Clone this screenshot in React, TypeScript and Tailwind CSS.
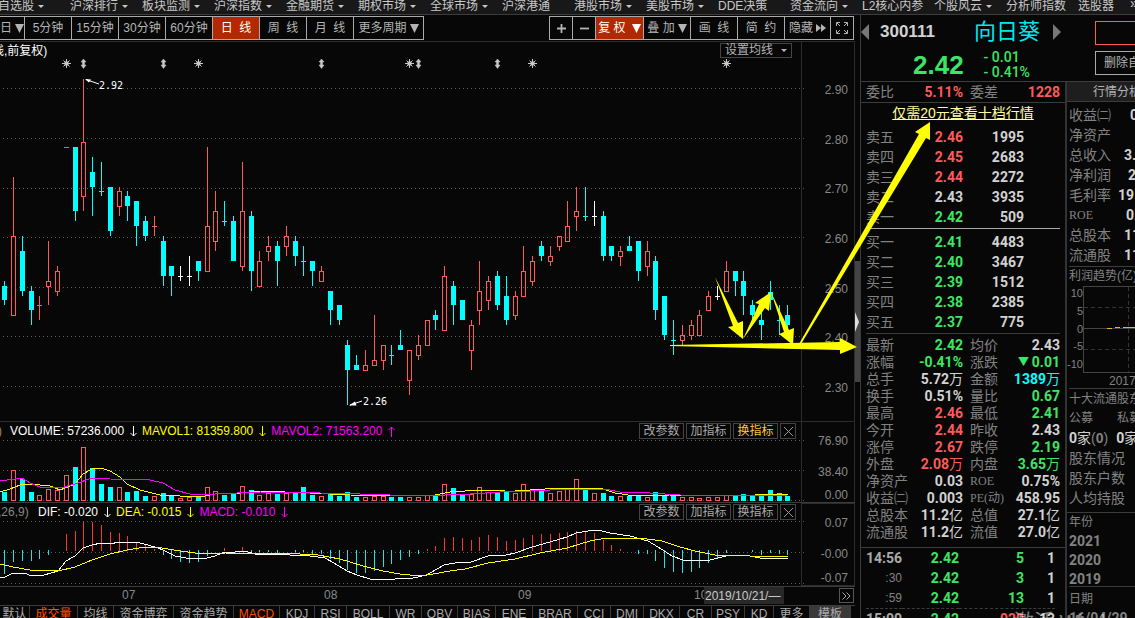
import React from "react";

type Kind = "r" | "c" | "w";
type Candle = [Kind, number, number, number, number];

const RED = "#ff5a5a";
const CYAN = "#00ffff";
const tone: Record<Kind, string> = { r: RED, c: CYAN, w: "#ffffff" };

// kind, high, body top, body bottom, low
const candles: Candle[] = [
  ["c", 281, 286, 300, 305], ["r", 177, 236, 316, 316], ["c", 236, 251, 291, 296], ["c", 286, 291, 310, 325],
  ["r", 296, 305, 305, 320], ["r", 241, 281, 287, 305], ["r", 266, 271, 292, 296], ["r", 147, 147, 147, 148],
  ["c", 147, 147, 211, 221], ["r", 79, 142, 197, 211], ["c", 157, 172, 187, 216], ["c", 162, 191, 191, 196],
  ["c", 187, 187, 231, 236], ["r", 187, 191, 207, 216], ["c", 191, 196, 206, 221], ["c", 201, 201, 226, 246],
  ["c", 216, 221, 236, 241], ["r", 216, 226, 226, 236], ["c", 236, 241, 276, 286], ["c", 266, 266, 276, 296],
  ["w", 266, 276, 276, 281], ["w", 256, 276, 276, 286], ["c", 261, 261, 271, 281], ["r", 147, 226, 272, 272],
  ["r", 191, 211, 242, 251], ["c", 201, 221, 221, 226], ["c", 216, 221, 261, 261], ["r", 162, 211, 267, 271],
  ["c", 211, 216, 271, 291], ["r", 251, 261, 287, 287], ["r", 236, 246, 252, 261], ["c", 241, 246, 261, 286],
  ["r", 226, 236, 247, 256], ["c", 236, 241, 256, 266], ["c", 246, 261, 261, 276], ["c", 261, 261, 271, 286],
  ["r", 266, 271, 282, 282], ["c", 291, 291, 310, 325], ["c", 305, 305, 320, 325], ["c", 340, 345, 370, 405],
  ["c", 355, 365, 370, 370], ["r", 350, 365, 371, 371], ["r", 315, 360, 366, 366], ["r", 345, 345, 361, 370],
  ["c", 345, 355, 355, 365], ["c", 330, 345, 350, 350], ["r", 350, 350, 381, 395], ["r", 335, 345, 356, 360],
  ["r", 320, 320, 346, 346], ["c", 310, 315, 320, 330], ["r", 266, 276, 331, 331], ["c", 281, 286, 305, 325],
  ["c", 300, 300, 320, 320], ["r", 320, 325, 351, 370], ["r", 261, 291, 311, 325], ["r", 276, 281, 301, 310],
  ["c", 271, 276, 305, 310], ["c", 276, 296, 320, 325], ["r", 291, 296, 316, 320], ["r", 246, 271, 297, 297],
  ["r", 256, 261, 282, 286], ["c", 241, 246, 256, 261], ["r", 246, 256, 262, 266], ["r", 236, 236, 247, 251],
  ["r", 201, 226, 242, 242], ["r", 187, 211, 217, 231], ["c", 187, 216, 216, 221], ["w", 201, 216, 216, 226],
  ["c", 211, 216, 256, 261], ["c", 246, 246, 256, 261], ["r", 246, 251, 257, 266], ["c", 236, 246, 251, 251],
  ["c", 241, 241, 271, 281], ["r", 241, 251, 267, 276], ["c", 256, 261, 310, 320], ["c", 296, 296, 335, 340],
  ["c", 320, 340, 340, 355], ["r", 325, 335, 341, 345], ["r", 320, 325, 336, 340], ["r", 310, 315, 336, 336],
  ["r", 291, 296, 311, 311], ["w", 286, 296, 296, 300], ["r", 261, 271, 292, 292], ["c", 271, 271, 281, 296],
  ["c", 271, 281, 296, 315], ["c", 300, 305, 315, 320], ["c", 312, 320, 325, 340], ["c", 281, 292, 300, 310],
  ["c", 305, 320, 320, 335], ["c", 305, 315, 325, 332],
];

const volumeTops = [
  492, 470, 479, 492, 495, 489, 490, 475, 467, 447, 468, 484, 487, 487, 492, 491, 496, 496, 493, 496, 498, 497, 497,
  487, 491, 495, 494, 486, 490, 495, 493, 494, 493, 493, 487, 495, 496, 494, 496, 492, 497, 497, 496, 496, 497, 497,
  497, 497, 495, 496, 484, 488, 494, 494, 487, 492, 492, 492, 493, 484, 490, 489, 493, 491, 488, 479, 489, 493, 493,
  496, 496, 496, 495, 497, 492, 495, 495, 497, 497, 498, 497, 497, 495, 496, 494, 495, 496, 490, 493, 496,
];

// 0 draws nothing
const macdEnds = [
  574, 562, 561, 561, 559, 555, 0, 534, 531, 522, 522, 525, 532, 533, 536, 542, 545, 549, 555, 559, 562, 563, 562,
  556, 0, 548, 0, 547, 552, 552, 552, 553, 0, 552, 552, 554, 554, 559, 563, 570, 573, 573, 571, 567, 564, 560, 557,
  554, 549, 546, 538, 537, 538, 540, 537, 535, 537, 541, 540, 538, 535, 534, 534, 533, 532, 531, 532, 533, 540, 545,
  549, 0, 554, 554, 561, 568, 572, 573, 572, 568, 563, 559, 553, 0, 0, 552, 555, 553, 554, 555,
];

const cx = (i: number) => Math.floor(4.65 + 8.8 * i);

function Grid({ ys }: { ys: number[] }) {
  return (
    <>
      {ys.map((y) => (
        <line key={y} x1="3" x2="804" y1={y + 0.5} y2={y + 0.5} stroke="#5a5a5a" strokeDasharray="1 3" />
      ))}
    </>
  );
}

function Star({ x }: { x: number }) {
  return (
    <g stroke="#c8c8c8" strokeWidth="1" shapeRendering="auto">
      <circle cx={x + 0.5} cy="63.5" r="2.3" fill="#c8c8c8" stroke="none" />
      <path d={`M${x - 4} 63.5h9M${x + 0.5} 59v9M${x - 2.5} 60.5l6 6M${x + 3.5} 60.5l-6 6`} />
    </g>
  );
}

function UpDown({ x }: { x: number }) {
  return (
    <path
      d={`M${x + 0.5} 59l2.5 3h-1.5v3h1.5l-2.5 3.5l-2.5-3.5h1.5v-3h-1.5z`}
      fill="#c8c8c8"
      stroke="#c8c8c8"
      strokeWidth="0.5"
      shapeRendering="auto"
    />
  );
}

function CandleChart() {
  return (
    <svg
      className="absolute inset-0 h-full w-full overflow-visible"
      viewBox="0 42 801 379"
      preserveAspectRatio="none"
      shapeRendering="crispEdges"
      aria-hidden="true"
    >
      <Grid ys={[88, 138, 188, 237, 287, 336, 386]} />
      {[66, 198, 409, 532, 726].map((x) => (
        <Star key={x} x={x} />
      ))}
      {[83, 163, 321, 418, 497].map((x) => (
        <UpDown key={x} x={x} />
      ))}
      {candles.map(([k, h, t, b, l], i) => {
        const x = cx(i);
        const color = tone[k];
        if (t === b) {
          return (
            <g key={i} fill={color}>
              <rect x={x} y={h} width="1" height={l - h} />
              <rect x={x - 2} y={t} width="5" height="1" />
            </g>
          );
        }
        return (
          <g key={i} fill={color}>
            {t > h && <rect x={x} y={h} width="1" height={t - h} />}
            {l > b && <rect x={x} y={b} width="1" height={l - b} />}
            {k === "r" ? (
              <rect x={x - 1.5} y={t + 0.5} width="4" height={b - t - 1} fill="none" stroke={color} />
            ) : (
              <rect x={x - 2} y={t} width="5" height={b - t} />
            )}
          </g>
        );
      })}
      <g stroke="#fff" fill="#fff" shapeRendering="auto">
        <path d="M99 84L86 79.500" />
        <path d="M85 79l6 0.500l-2 3z" stroke="none" />
        <path d="M362 401L350 405" />
        <path d="M349 405.500l6-4l1.500 4z" stroke="none" />
      </g>
      <g fill="#fff" className="font-['DejaVu_Sans_Mono',monospace] text-[10px]">
        <text x="99" y="89">2.92</text>
        <text x="363" y="405">2.26</text>
      </g>
    </svg>
  );
}

function VolumeChart() {
  return (
    <svg
      className="absolute inset-0 h-full w-full overflow-visible"
      viewBox="0 422 801 80"
      preserveAspectRatio="none"
      shapeRendering="crispEdges"
      aria-hidden="true"
    >
      <Grid ys={[440, 470, 500]} />
      {volumeTops.map((y, i) => {
        const x = cx(i);
        return candles[i][0] === "c" ? (
          <rect key={i} x={x - 2} y={y} width="5" height={501 - y} fill={CYAN} />
        ) : (
          <rect key={i} x={x - 1.5} y={y + 0.5} width="4" height={500 - y} fill="none" stroke={RED} />
        );
      })}
      <polyline
        fill="none"
        stroke="#ffff00"
        points="0,492 10,489 20,485 30,484 50,486 60,490 75,484 83,474 92,469 101,468 110,471 120,477 127,484 140,490 160,495 180,496 205,496 215,494 240,493 260,491 285,492 310,493 350,495 390,496 435,495 450,492 480,490 505,491 515,491 545,489 575,488 600,488 615,493 635,496 670,495 690,495 715,496 755,495 770,494 788,494"
      />
      <polyline
        fill="none"
        stroke="#ff00ff"
        points="0,481 22,478 30,483 40,487 60,488 75,484 92,478 110,479 150,480 163,483 175,490 190,494 215,494 260,492 320,493 360,494 420,496 470,494 500,492 530,491 570,489 605,489 620,492 650,493 680,495 740,496 788,495"
      />
    </svg>
  );
}

function MacdChart() {
  return (
    <svg
      className="absolute inset-0 h-full w-full overflow-visible"
      viewBox="0 503 801 83"
      preserveAspectRatio="none"
      shapeRendering="crispEdges"
      aria-hidden="true"
    >
      <Grid ys={[521, 552, 583]} />
      {macdEnds.map((y, i) => {
        if (!y) return null;
        return y < 551 ? (
          <rect key={i} x={cx(i)} y={y} width="1" height={551 - y} fill="#ff3232" />
        ) : (
          <rect key={i} x={cx(i)} y="550" width="1" height={y - 550} fill="#19e6e6" />
        );
      })}
      <polyline
        fill="none"
        stroke="#ffffff"
        points="0,578 5,577 13,573 24,573 32,576 44,575 58,571 66,561 75,556 83,548 92,545 101,543 110,544 119,542 136,542 148,545 158,548 163,550 175,556 186,558 198,559 207,558 215,556 222,553 235,552 245,551 255,554 270,554 290,555 310,556 325,558 334,563 347,571 357,575 370,579 395,579 413,578 427,575 430,573 444,565 455,563 471,562 488,556 506,555 515,553 532,547 550,542 567,537 576,533 588,531 598,530 610,533 630,536 648,541 658,547 672,556 683,560 695,561 710,560 726,556 745,555 760,558 775,558 788,559"
      />
      <polyline
        fill="none"
        stroke="#ffff00"
        points="0,564 13,567 30,570 58,571 75,567 92,560 110,554 127,550 145,547 162,548 180,551 203,554 225,553 300,554 318,555 340,559 363,566 383,571 400,574 420,576 433,574 450,571 465,569 488,563 515,559 540,553 567,548 590,541 606,538 640,538 662,541 680,547 695,551 715,555 750,556 788,557"
      />
    </svg>
  );
}

const navItems: [string, boolean][] = [
  ["自选股", true], ["沪深排行", true], ["板块监测", true], ["沪深指数", true], ["金融期货", true],
  ["期权市场", true], ["全球市场", true], ["沪深港通", false], ["港股市场", true], ["美股市场", true],
  ["DDE决策", false], ["资金流向", true], ["L2核心内参", false], ["个股风云", true], ["分析师指数", false],
  ["选股器", false],
];

function Caret({ big = false }: { big?: boolean }) {
  return big ? (
    <svg className="h-[9px] w-[9px] shrink-0" viewBox="0 0 9 9" aria-hidden="true">
      <path d="M0 0h9L4.500 9z" fill="currentColor" />
    </svg>
  ) : (
    <svg className="h-[3px] w-[6px] shrink-0" viewBox="0 0 6 3" aria-hidden="true">
      <path d="M0 0h6L3 3z" fill="currentColor" />
    </svg>
  );
}

function NavBar() {
  return (
    <nav className="flex h-[15px] shrink-0 overflow-hidden border-b border-[#3c3c3c] bg-[#181818] text-[12px] leading-[12px] text-[#c8c8c8]">
      <div className="-ml-[2px] flex h-3 shrink-0">
        {navItems.map(([label, caret]) => (
          <a key={label} href="#" className="flex w-[72px] shrink-0 items-center gap-1 whitespace-nowrap">
            {label}
            {caret && <Caret />}
          </a>
        ))}
      </div>
      <a href="#" className="-ml-5 h-2 w-5 text-[14px] leading-[7px]">
        »
      </a>
    </nav>
  );
}

function Tool({ className = "", children, label }: { className?: string; children: React.ReactNode; label?: string }) {
  return (
    <button
      type="button"
      aria-label={label}
      className={`flex h-[22px] shrink-0 items-center justify-center gap-[3px] whitespace-pre border-r border-[#aaaaaa] ${className}`}
    >
      {children}
    </button>
  );
}

function Toolbar() {
  return (
    <div className="flex h-[27px] shrink-0 justify-between border-b border-[#2c2c2c] pt-px text-[12px] text-[#b4b4b4]">
      <div className="flex h-6 border-y border-[#aaaaaa]">
        <Tool className="w-[25px]">日<Caret big /></Tool>
        <Tool className="w-[47px]">5分钟</Tool>
        <Tool className="w-[47px]">15分钟</Tool>
        <Tool className="w-[47px]">30分钟</Tool>
        <Tool className="w-[47px]">60分钟</Tool>
        <Tool className="w-[47px] bg-[#b42800] text-white">日  线</Tool>
        <Tool className="w-[47px]">周  线</Tool>
        <Tool className="w-[47px]">月  线</Tool>
        <Tool className="w-[70px]">更多周期<Caret big /></Tool>
      </div>
      <div className="mr-px flex h-6 border-y border-l border-[#aaaaaa]">
        <Tool className="w-[23px]" label="放大">
          <svg className="h-[9px] w-[9px]" viewBox="0 0 9 9"><path d="M0 4.500h9M4.500 0v9" stroke="currentColor" strokeWidth="1.800" /></svg>
        </Tool>
        <Tool className="w-[23px]" label="缩小">
          <svg className="h-[9px] w-[9px]" viewBox="0 0 9 9"><path d="M0 4.500h9" stroke="currentColor" strokeWidth="1.800" /></svg>
        </Tool>
        <Tool className="w-12 bg-[#b42800] text-white">复 权 <Caret big /></Tool>
        <Tool className="w-[47px]">叠 加<Caret big /></Tool>
        <Tool className="w-[47px]">画  线</Tool>
        <Tool className="w-[47px]">简  约</Tool>
        <Tool className="w-[46px]">
          隐藏
          <svg className="h-2 w-[10px]" viewBox="0 0 10 8" aria-hidden="true"><path d="M0 0l5 4l-5 4zM5 0l5 4l-5 4z" fill="currentColor" /></svg>
        </Tool>
        <Tool className="w-[23px]" label="全屏">
          <svg className="h-3 w-3" viewBox="0 0 12 12" fill="none" stroke="currentColor">
            <path d="M0.500 4V0.500H4M8 0.500h3.500V4M11.500 8v3.500H8M4 11.500H0.500V8M1 1l3 3M11 1l-3 3M1 11l3-3M11 11l-3-3" />
          </svg>
        </Tool>
      </div>
    </div>
  );
}

function IndicatorButtons({ active = false }: { active?: boolean }) {
  const base = "h-4 w-[45px] border border-[#444444] text-center leading-[14px]";
  return (
    <div className="flex gap-[2px] text-[12px] text-[#aaaaaa]">
      <button type="button" className={base}>改参数</button>
      <button type="button" className={base}>加指标</button>
      <button type="button" className={`${base} ${active ? "text-[#ffc832]" : ""}`}>换指标</button>
      <button type="button" aria-label="关闭" className="flex h-4 w-4 items-center justify-center border border-[#444444]">
        <svg className="h-[9px] w-[9px]" viewBox="0 0 9 9"><path d="M0 0l9 9M9 0L0 9" stroke="#999" /></svg>
      </button>
    </div>
  );
}

function Dir({ up = false }: { up?: boolean }) {
  return (
    <svg className="mr-[5px] ml-[6px] h-[11px] w-[7px]" viewBox="0 0 7 11" fill="none" stroke="currentColor" aria-hidden="true">
      {up ? <path d="M3.500 11V1M0.500 4l3-3l3 3" /> : <path d="M3.500 0v10M0.500 7l3 3l3-3" />}
    </svg>
  );
}

const indicatorTabs: [string, string][] = [
  ["默认", "w-[30px]"], ["成交量", "w-12"], ["均线", "w-9"], ["资金博弈", "w-[60px]"], ["资金趋势", "w-[60px]"],
  ["MACD", "w-[46px]"], ["KDJ", "w-[35px]"], ["RSI", "w-8"], ["BOLL", "w-[43px]"], ["WR", "w-8"], ["OBV", "w-9"],
  ["BIAS", "w-[38px]"], ["ENE", "w-[37px]"], ["BRAR", "w-[45px]"], ["CCI", "w-[33px]"], ["DMI", "w-[33px]"],
  ["DKX", "w-9"], ["CR", "w-8"], ["PSY", "w-[33px]"], ["KD", "w-[29px]"], ["更多", "w-9"], ["模板", "w-[41px]"],
];

const axis = "flex w-[54px] shrink-0 flex-col justify-between border-x border-[#2c2c2c] pr-[6px] text-right text-[12px] leading-[14px] text-[#888888]";

function ChartArea() {
  return (
    <div className="flex min-w-0 flex-1 flex-col">
      <Toolbar />
      <section className="flex min-h-0 flex-1 border-b border-[#2c2c2c]">
        <div className="relative min-w-0 flex-1">
          <CandleChart />
          <div className="flex justify-between text-[12px]">
            <span className="-ml-2 leading-[19px] text-white">线,前复权)</span>
            <button type="button" className="mt-px mr-[9px] flex h-[15px] w-[72px] items-center justify-center gap-2 border border-[#444444] leading-[13px] text-[#b4b4b4]">
              设置均线
              <Caret />
            </button>
          </div>
        </div>
        <div className={`${axis} pt-[41px] pb-[26px]`}>
          {["2.90", "2.80", "2.70", "2.60", "2.50", "2.40", "2.30"].map((v) => (
            <span key={v}>{v}</span>
          ))}
        </div>
      </section>

      <section className="flex h-[81px] shrink-0 border-b border-[#3c3c3c]">
        <div className="relative min-w-0 flex-1">
          <VolumeChart />
          <div className="relative flex justify-between pt-px pr-[5px]">
            <div className="flex items-center whitespace-nowrap text-[12px] leading-4 text-white">
              <span className="-ml-[2px] w-3 text-[#888888]">)</span>
              <span>VOLUME: 57236.000</span>
              <Dir />
              <span className="flex items-center text-[#ffff00]">MAVOL1: 81359.800<Dir /></span>
              <span className="flex items-center text-[#ff00ff]">MAVOL2: 71563.200<Dir up /></span>
            </div>
            <IndicatorButtons active />
          </div>
        </div>
        <div className={`${axis} pt-3`}>
          <span>76.90</span>
          <span className="pt-2">38.40</span>
          <span>0.00</span>
        </div>
      </section>

      <section className="flex h-[84px] shrink-0 border-b border-[#3c3c3c]">
        <div className="relative min-w-0 flex-1">
          <MacdChart />
          <div className="relative flex justify-between pt-px pr-[5px]">
            <div className="flex items-center whitespace-nowrap text-[12px] leading-4 text-white">
              <span className="-ml-[2px] w-10 text-[#888888]">,26,9)</span>
              <span>DIF: -0.020</span>
              <Dir />
              <span className="flex items-center text-[#ffff00]">DEA: -0.015<Dir /></span>
              <span className="flex items-center text-[#ff00ff]">MACD: -0.010<Dir /></span>
            </div>
            <IndicatorButtons />
          </div>
        </div>
        <div className={`${axis} border-y pt-3`}>
          <span>0.07</span>
          <span className="pt-[6px]">-0.00</span>
          <span>-0.07</span>
        </div>
      </section>

      <div className="flex h-[18px] shrink-0 pl-[122px] text-[12px] leading-4 text-[#888888]">
        <span className="w-[202px]">07</span>
        <span className="w-[194px]">08</span>
        <span className="w-[176px]">09</span>
        <span className="w-[10px] overflow-hidden">10</span>
        <span className="h-[17px] w-[80px] bg-[#282828] pl-px pt-px text-[#c8c8c8]">2019/10/21/—</span>
        <button type="button" aria-label="展开" className="mt-px mr-[1px] ml-auto flex h-[15px] w-[15px] items-center justify-center border border-[#555555]">
          <svg className="h-2 w-[9px]" viewBox="0 0 9 8" fill="none" stroke="#aaa"><path d="M0.500 0.500L4 4L0.500 7.500M4.500 0.500L8 4L4.500 7.500" /></svg>
        </button>
      </div>

      <div className="flex h-[13px] shrink-0 overflow-hidden border-t border-[#3c3c3c] text-[12px] leading-4 text-[#aaaaaa]">
        {indicatorTabs.map(([label, width]) => (
          <button
            key={label}
            type="button"
            className={`${width} h-4 shrink-0 whitespace-nowrap border-r border-[#3c3c3c] ${
              label === "MACD" || label === "成交量" ? "text-[#ff5000]" : ""
            } ${label === "模板" ? "mr-1 ml-auto bg-[#3a3a3a]" : ""}`}
          >
            <span className="flex justify-center">{label}</span>
          </button>
        ))}
      </div>
    </div>
  );
}

const up = "text-[#ff5a5a]";
const down = "text-[#3ce664]";
const flat = "text-[#d2d2d2]";
const numFont = "font-['Roboto','Noto_Sans_CJK_SC',sans-serif]";
const num = "font-['Roboto','Noto_Sans_CJK_SC',sans-serif] font-bold";

const sells = [
  ["卖五", "2.46", "1995", up], ["卖四", "2.45", "2683", up], ["卖三", "2.44", "2272", up],
  ["卖二", "2.43", "3935", flat], ["卖一", "2.42", "509", down],
];
const buys = [
  ["买一", "2.41", "4483", down], ["买二", "2.40", "3467", down], ["买三", "2.39", "1512", down],
  ["买四", "2.38", "2385", down], ["买五", "2.37", "775", down],
];

function Orders({ rows }: { rows: string[][] }) {
  return (
    <table className="w-full table-fixed">
      <tbody>
        {rows.map(([label, price, size, color]) => (
          <tr key={label} className="h-5 leading-5">
            <th className="w-[40px] p-0 text-left font-normal text-[#828282]">{label}</th>
            <td className={`w-[57px] p-0 text-right ${num} ${color}`}>{price}</td>
            <td className={`w-[61px] p-0 text-right ${num} ${flat}`}>{size}</td>
            <td className="p-0" />
          </tr>
        ))}
      </tbody>
    </table>
  );
}

const stats: string[][] = [
  ["最新", "2.42", down, "均价", "2.43", flat],
  ["涨幅", "-0.41%", down, "涨跌", "▼ 0.01", down],
  ["总手", "5.72万", flat, "金额", "1389万", "text-[#00ffff]"],
  ["换手", "0.51%", flat, "量比", "0.67", down],
  ["最高", "2.46", up, "最低", "2.41", down],
  ["今开", "2.44", up, "昨收", "2.43", flat],
  ["涨停", "2.67", up, "跌停", "2.19", down],
  ["外盘", "2.08万", up, "内盘", "3.65万", down],
  ["净资产", "0.03", flat, "ROE", "0.75%", flat],
  ["收益㈡", "0.003", flat, "PE(动)", "458.95", flat],
  ["总股本", "11.2亿", flat, "总值", "27.1亿", flat],
  ["流通股", "11.2亿", flat, "流值", "27.0亿", flat],
];

function Value({ text, color }: { text: string; color: string }) {
  const m = text.match(/^(▼ )?([^万亿]*)([万亿]?)$/);
  return (
    <span className={`flex items-center whitespace-pre ${num} ${color}`}>
      {m?.[1] && <span className="text-[11px]">{m[1]}</span>}
      {m?.[2]}
      <span className="font-normal">{m?.[3]}</span>
    </span>
  );
}

function Label({ text }: { text: string }) {
  return text.startsWith("ROE") || text.startsWith("PE") ? (
    <span className="whitespace-nowrap font-['Liberation_Serif','Noto_Sans_CJK_SC',serif] text-[12px] text-[#828282]">{text}</span>
  ) : (
    <span className="whitespace-nowrap text-[#828282]">{text}</span>
  );
}

const ticks = [
  ["14:56", "2.42", "5", "1"],
  [":30", "2.42", "3", "1"],
  [":59", "2.42", "13", "1"],
  ["15:00", "2.42", "929", "13"],
];

function QuotePanel() {
  return (
    <div className="flex w-[205px] shrink-0 flex-col border-l border-[#3c3c3c] text-[14px]">
      <header className="flex h-[67px] shrink-0 flex-col border-b border-[#3c3c3c]">
        <div className="flex h-[34px] items-center pr-1">
          <button type="button" aria-label="上一只">
            <svg className="h-4 w-2" viewBox="0 0 8 16"><path d="M8 0v16L0 8z" fill="#777" /></svg>
          </button>
          <span className="ml-[11px] w-[94px] text-[17px] font-bold text-[#d2d2d2]">300111</span>
          <span className="text-[22px] leading-[34px] text-[#00e6f0]">向日葵</span>
          <button type="button" aria-label="下一只" className="ml-auto">
            <svg className="h-4 w-2" viewBox="0 0 8 16"><path d="M0 0v16L8 8z" fill="#777" /></svg>
          </button>
        </div>
        <div className={`flex items-center gap-5 pl-[52px] ${down}`}>
          <span className="text-[26px] leading-[30px] font-bold">2.42</span>
          <span className={`whitespace-nowrap pt-px leading-[15px] font-medium ${numFont}`}>
            - 0.01<br />- 0.41%
          </span>
        </div>
      </header>
      <div className="flex h-[21px] shrink-0 items-center border-b border-[#3c3c3c] pr-[5px] pl-[5px]">
        <span className="flex w-[97px] justify-between"><Label text="委比" /><Value text="5.11%" color={up} /></span>
        <span className="ml-[7px] flex flex-1 justify-between"><Label text="委差" /><Value text="1228" color={up} /></span>
      </div>
      <div className="h-[24px] shrink-0 text-center leading-[20px]">
        <a href="#" className="text-[#ffffa0] underline">仅需20元查看十档行情</a>
      </div>
      <div className="mx-[5px] border-b border-[#aaaaaa] pb-px"><Orders rows={sells} /></div>
      <div className="mx-[5px] border-b border-[#3c3c3c] pt-[3px] pb-px"><Orders rows={buys} /></div>
      <div className="grid grid-cols-[97px_1fr] gap-x-[7px] border-b border-[#3c3c3c] px-[5px] pt-[3px] pb-[6px] leading-[17px]">
        {stats.map(([a, av, ac, b, bv, bc]) => (
          <React.Fragment key={a}>
            <span className="flex h-[17px] justify-between"><Label text={a} /><Value text={av} color={ac} /></span>
            <span className="flex h-[17px] justify-between"><Label text={b} /><Value text={bv} color={bc} /></span>
          </React.Fragment>
        ))}
      </div>
      <table className="ml-[5px] w-[189px] table-fixed">
        <tbody>
          {ticks.map(([time, price, size, n], i) => (
            <tr key={time} className={`h-5 leading-5 ${i === 3 ? "border-t border-dashed border-[#3c3c3c]" : ""}`}>
              <td className={`w-[36px] p-0 text-right ${i % 3 === 0 ? `${num} text-[#aaaaaa]` : "text-[12px] text-[#828282]"}`}>{time}</td>
              <td className={`w-[57px] p-0 text-right ${num} ${down}`}>{price}</td>
              <td className={`w-[65px] p-0 text-right ${num} ${i === 3 ? up : down}`}>{size}</td>
              <td className={`p-0 text-right ${num} ${flat}`}>{n}</td>
            </tr>
          ))}
        </tbody>
      </table>
    </div>
  );
}

const finance: [string, string, string][] = [
  ["收益㈡", "0.003", "w-9"], ["净资产", "", "w-9"], ["总收入", "3.", "w-[42px]"], ["净利润", "2", "w-[38px]"],
  ["毛利率", "19", "w-12"], ["ROE", "0.75%", "w-10"], ["总股本", "11.2亿", "w-[42px]"], ["流通股", "11.2亿", "w-[42px]"],
];

function DetailPanel() {
  return (
    <aside className="flex w-[70px] shrink-0 flex-col overflow-hidden whitespace-nowrap text-[14px]">
      <div className="flex h-[67px] shrink-0 flex-col gap-[6px] border-b border-[#3c3c3c] pt-[6px] pl-[30px] text-[12px] text-[#b4b4b4]">
        <button type="button" aria-label="买入" className="h-6 w-[72px] shrink-0 border border-[#ff5a5a]" />
        <button type="button" className="h-6 w-[72px] shrink-0 border border-[#aaaaaa] pl-2 text-left">删除自选</button>
      </div>
      <div className="flex flex-1 flex-col overflow-hidden border-l-2 border-[#333333]">
        <h2 className="h-5 shrink-0 border-b border-[#3c3c3c] bg-[#1e1e1e] pl-[26px] text-[12px] leading-5 text-[#b4b4b4]">行情分析</h2>
        <div className="ml-[2px] border-b border-[#3c3c3c] pt-[3px] pb-px">
          {finance.map(([label, value, width]) => (
            <div key={label} className="flex h-5 w-[97px] items-center justify-between leading-5">
              <Label text={label} />
              <span className={`${width} shrink-0`}><Value text={value} color={flat} /></span>
            </div>
          ))}
        </div>
        <h3 className="ml-[2px] h-[19px] shrink-0 text-[12px] leading-[19px] text-[#828282]">利润趋势(亿)</h3>
        <div className="flex h-[87px] shrink-0">
          <div className="flex w-4 shrink-0 flex-col items-end justify-between pb-[2px] text-[11px] leading-[14px] text-[#828282]">
            <span>10</span><span>5</span><span>0</span><span>-5</span><span>-10</span>
          </div>
          <svg className="h-[87px] w-[52px] shrink-0" viewBox="0 0 52 87" shapeRendering="crispEdges" aria-hidden="true">
            <path d="M52 0.500H0.500V86.500H52M0.500 42.500H52" fill="none" stroke="#444" />
            <path d="M1 21.500H52M1 63.500H52M45.500 1V86" fill="none" stroke="#333" strokeDasharray="4 3" />
            <path d="M24 42.500h5M32 41.500h5M40 41.500h12" stroke="#ffaa32" />
          </svg>
        </div>
        <div className="ml-[2px] h-4 shrink-0 border-b border-[#3c3c3c] pl-[40px] text-[12px] leading-4 text-[#828282]">2017</div>
        <div className="ml-[2px] text-[12px] text-[#828282]">
          <h3 className="h-5 leading-5">十大流通股东</h3>
          <div className="flex h-[19px] gap-6 leading-[19px]"><span>公募</span><span>私募</span></div>
          <div className="flex h-5 items-center gap-2 text-[14px] leading-5">
            <span><b className={`${flat} ${num}`}>0</b><span className={flat}>家</span>(<b>0</b>)</span>
            <span><b className={`${flat} ${num}`}>0</b><span className={flat}>家</span></span>
          </div>
        </div>
        <div className="border-b border-[#3c3c3c] pb-[4px] pl-[2px] leading-5 text-[#828282]">
          <div className="h-5">股东情况</div>
          <div className="h-5">股东户数</div>
          <div className="h-5">人均持股</div>
        </div>
        <div className="ml-[2px] h-[74px] shrink-0 border-b border-[#3c3c3c] text-[#828282]">
          <div className="h-[19px] text-[12px] leading-[19px]">年份</div>
          {["2021", "2020", "2019"].map((y) => (
            <div key={y} className={`h-[19px] leading-[19px] ${num}`}>{y}</div>
          ))}
        </div>
        <div className="ml-[2px] text-[#828282]">
          <div className="h-[22px] text-[12px] leading-[24px]">日期</div>
          <div className={`leading-[18px] ${num}`}>16/04/29</div>
        </div>
      </div>
    </aside>
  );
}

function Annotations() {
  return (
    <svg className="pointer-events-none absolute top-0 left-0 h-[618px] w-[1135px]" viewBox="0 0 1135 618" fill="#ffff00" aria-hidden="true">
      <path d="M715 277L738 323L743 321L743 339L728 327L733 326Z" />
      <path d="M743 339L759 304L755 303L771 292L769 311L765 308Z" />
      <path d="M771 292L789 330L794 328L793 345L779 334L784 332Z" />
      <path d="M670 345L840 342V338L857 347L840 354V350L670 346Z" />
      <path d="M799 344L919 134L915 132L930 122L930 140L926 138L801 344Z" />
    </svg>
  );
}

export default function App() {
  return (
    <main className="relative flex h-screen flex-col overflow-hidden bg-[#070707] font-['Liberation_Sans','Noto_Sans_CJK_SC',sans-serif]">
      <NavBar />
      <div className="flex min-h-0 flex-1">
        <ChartArea />
        <div className="flex w-[5px] shrink-0 flex-col pt-[246px]">
          <button type="button" aria-label="收起侧栏" className="flex h-[121px] items-center bg-[#444444]">
            <svg className="h-5 w-1" viewBox="0 0 4 20"><path d="M0 0l4 10L0 20z" fill="#ddd" /></svg>
          </button>
        </div>
        <QuotePanel />
        <DetailPanel />
      </div>
      <Annotations />
      <span className="pointer-events-none absolute top-[610px] left-[1014px] whitespace-nowrap text-[20px] leading-6 text-white/50">激活 Windows</span>
    </main>
  );
}
